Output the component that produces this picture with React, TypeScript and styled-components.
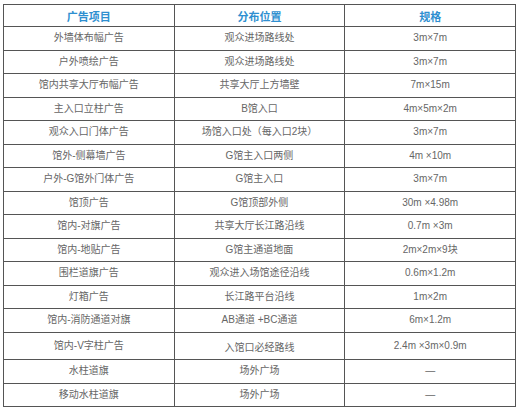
import React from "react";
import styled, { createGlobalStyle } from "styled-components";

const Global = createGlobalStyle`
  html, body { margin: 0; padding: 0; background: #fff; }
  body { font-family: "Liberation Sans", "Noto Sans CJK SC", sans-serif; }
`;

const Page = styled.div`
  padding: 4px 0 0 3px;
`;

const Table = styled.table`
  border-collapse: collapse;
  width: 513px;
  table-layout: fixed;
`;

const HeadCell = styled.th`
  border: 1px solid #555;
  height: 21px;
  padding: 0;
  color: #2f8fd0;
  font-size: 11px;
  font-weight: bold;
  text-align: center;
  vertical-align: middle;
`;

const Cell = styled.td<{ $shift?: number }>`
  border: 1px solid #555;
  height: 22.5px;
  padding: ${(p) => (p.$shift ? `${p.$shift}px 0 0` : "0")};
  color: #666;
  font-size: 10px;
  text-align: center;
  vertical-align: middle;
  line-height: 12px;
`;

const rows: [string, string, string][] = [
  ["外墙体布幅广告", "观众进场路线处", "3m×7m"],
  ["户外喷绘广告", "观众进场路线处", "3m×7m"],
  ["馆内共享大厅布幅广告", "共享大厅上方墙壁", "7m×15m"],
  ["主入口立柱广告", "B馆入口", "4m×5m×2m"],
  ["观众入口门体广告", "场馆入口处（每入口2块）", "3m×7m"],
  ["馆外-侧幕墙广告", "G馆主入口两侧", "4m ×10m"],
  ["户外-G馆外门体广告", "G馆主入口", "3m×7m"],
  ["馆顶广告", "G馆顶部外侧", "30m ×4.98m"],
  ["馆内-对旗广告", "共享大厅长江路沿线", "0.7m ×3m"],
  ["馆内-地贴广告", "G馆主通道地面", "2m×2m×9块"],
  ["围栏道旗广告", "观众进入场馆途径沿线", "0.6m×1.2m"],
  ["灯箱广告", "长江路平台沿线", "1m×2m"],
  ["馆内-消防通道对旗", "AB通道 +BC通道", "6m×1.2m"],
  ["馆内-V字柱广告", "入馆口必经路线", "2.4m ×3m×0.9m"],
  ["水柱道旗", "场外广场", "—"],
  ["移动水柱道旗", "场外广场", "—"],
];

export default function App() {
  return (
    <Page>
      <Global />
      <Table>
        <thead>
          <tr>
            <HeadCell>广告项目</HeadCell>
            <HeadCell>分布位置</HeadCell>
            <HeadCell>规格</HeadCell>
          </tr>
        </thead>
        <tbody>
          {rows.map((r, i) => (
            <tr key={i}>
              <Cell>{r[0]}</Cell>
              <Cell $shift={i === 13 ? 4 : 0}>{r[1]}</Cell>
              <Cell>{r[2]}</Cell>
            </tr>
          ))}
        </tbody>
      </Table>
    </Page>
  );
}
